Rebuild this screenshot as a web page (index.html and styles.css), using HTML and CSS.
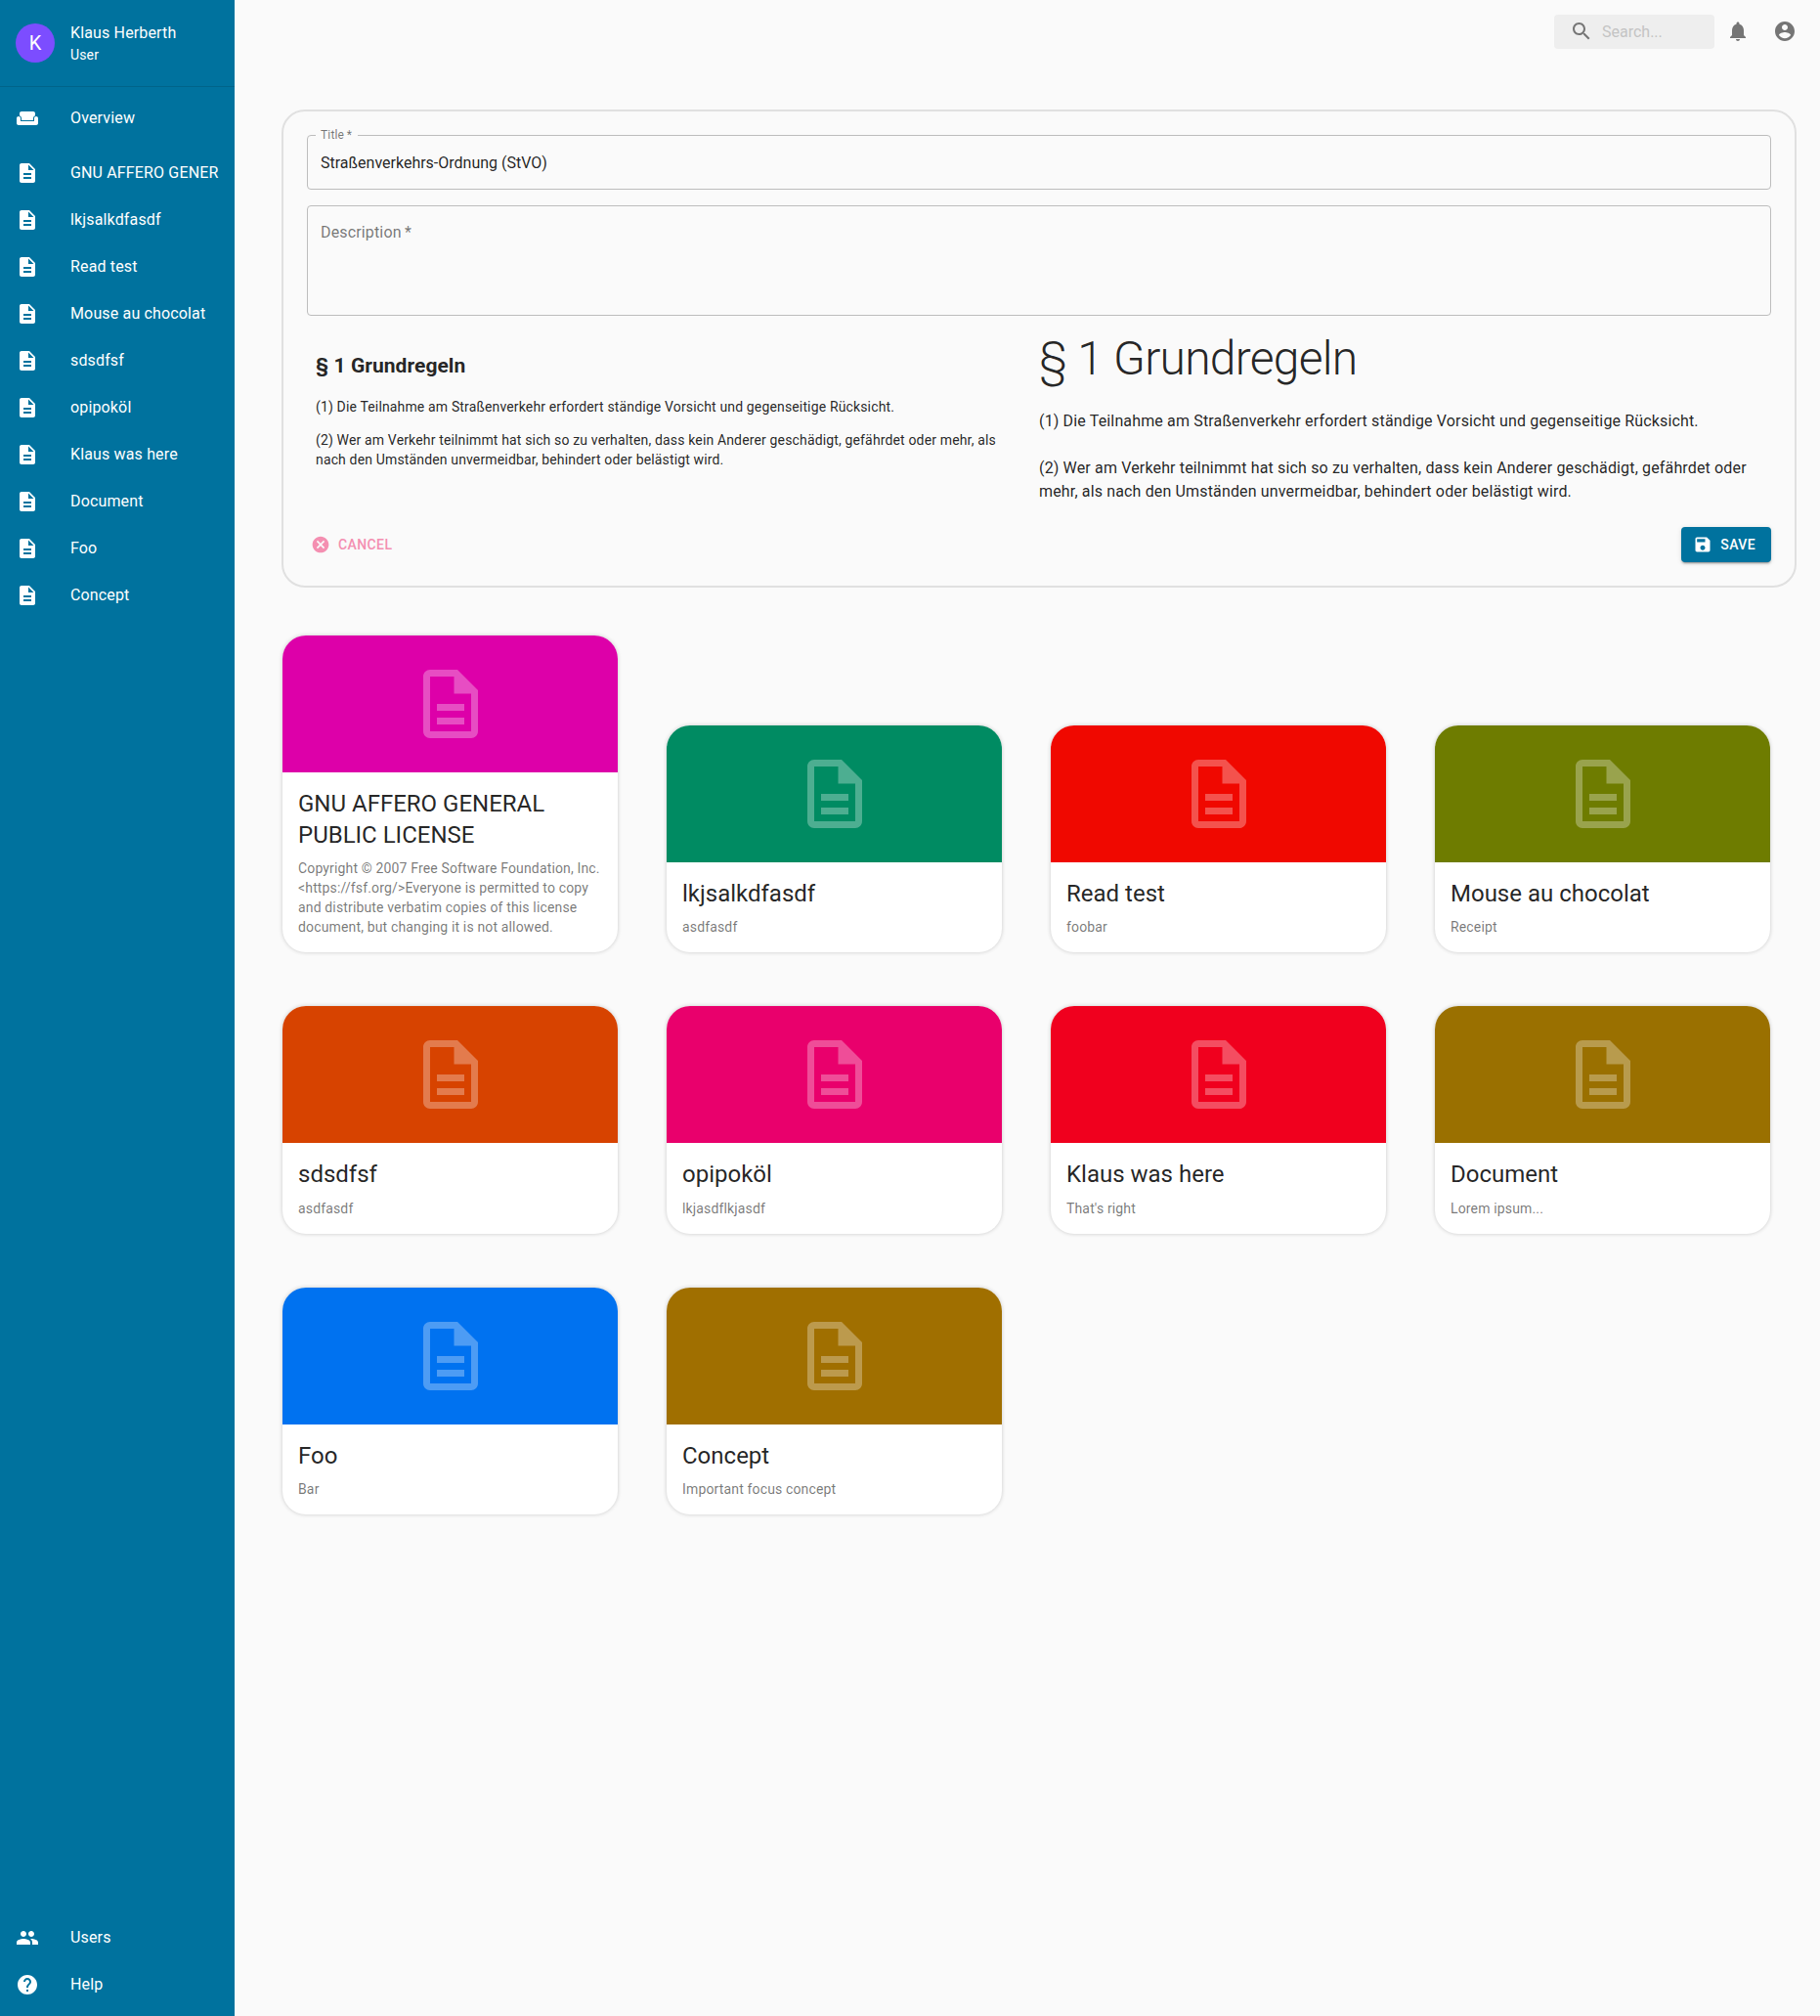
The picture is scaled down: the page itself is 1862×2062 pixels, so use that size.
FILE: index.html
```html
<!DOCTYPE html>
<html lang="de">
<head>
<meta charset="utf-8">
<title>Documents</title>
<link rel="stylesheet" href="styles.css">
</head>
<body>
<svg class="defs" width="0" height="0" aria-hidden="true">
  <symbol id="i-doc" viewBox="0 0 24 24"><path d="M14 2H6c-1.1 0-1.99.9-1.99 2L4 20c0 1.1.89 2 1.99 2H18c1.1 0 2-.9 2-2V8l-6-6zm2 16H8v-2h8v2zm0-4H8v-2h8v2zm-3-5V3.5L18.5 9H13z"/></symbol>
  <symbol id="i-doc-o" viewBox="0 0 24 24"><path d="M8 16h8v2H8zm0-4h8v2H8zm6-10H6c-1.1 0-2 .9-2 2v16c0 1.1.89 2 1.99 2H18c1.1 0 2-.9 2-2V8l-6-6zm4 18H6V4h7v5h5v11z"/></symbol>
  <symbol id="i-sofa" viewBox="0 0 24 24"><path d="M21 10c-1.1 0-2 .9-2 2v3H5v-3c0-1.1-.9-2-2-2s-2 .9-2 2v5c0 1.1.9 2 2 2h18c1.1 0 2-.9 2-2v-5c0-1.1-.9-2-2-2zm-3-5H6c-1.1 0-2 .9-2 2v2.15c1.16.41 2 1.52 2 2.81V14h12v-2.03c0-1.3.84-2.4 2-2.81V7c0-1.1-.9-2-2-2z"/></symbol>
  <symbol id="i-people" viewBox="0 0 24 24"><path d="M16 11c1.66 0 2.99-1.34 2.99-3S17.66 5 16 5c-1.66 0-3 1.34-3 3s1.34 3 3 3zm-8 0c1.66 0 2.99-1.34 2.99-3S9.66 5 8 5C6.34 5 5 6.34 5 8s1.34 3 3 3zm0 2c-2.33 0-7 1.17-7 3.5V19h14v-2.5c0-2.33-4.67-3.5-7-3.5zm8 0c-.29 0-.62.02-.97.05 1.16.84 1.97 1.97 1.97 3.45V19h6v-2.5c0-2.33-4.67-3.5-7-3.5z"/></symbol>
  <symbol id="i-help" viewBox="0 0 24 24"><path d="M12 2C6.48 2 2 6.48 2 12s4.48 10 10 10 10-4.48 10-10S17.52 2 12 2zm1 17h-2v-2h2v2zm2.07-7.75l-.9.92C13.45 12.9 13 13.5 13 15h-2v-.5c0-1.1.45-2.1 1.17-2.83l1.24-1.26c.37-.36.59-.86.59-1.41 0-1.1-.9-2-2-2s-2 .9-2 2H8c0-2.21 1.79-4 4-4s4 1.79 4 4c0 .88-.36 1.68-.93 2.25z"/></symbol>
</svg>

<div class="app">
  <aside class="sidebar">
    <div class="user">
      <div class="avatar">K</div>
      <div class="user-text">
        <div class="user-name">Klaus Herberth</div>
        <div class="user-role">User</div>
      </div>
    </div>
    <nav class="nav nav-top">
      <a class="nav-item"><svg class="nav-icon"><use href="#i-sofa"/></svg><span class="nav-label">Overview</span></a>
    </nav>
    <nav class="nav nav-docs">
      <a class="nav-item"><svg class="nav-icon"><use href="#i-doc"/></svg><span class="nav-label">GNU AFFERO GENER</span></a>
      <a class="nav-item"><svg class="nav-icon"><use href="#i-doc"/></svg><span class="nav-label">lkjsalkdfasdf</span></a>
      <a class="nav-item"><svg class="nav-icon"><use href="#i-doc"/></svg><span class="nav-label">Read test</span></a>
      <a class="nav-item"><svg class="nav-icon"><use href="#i-doc"/></svg><span class="nav-label">Mouse au chocolat</span></a>
      <a class="nav-item"><svg class="nav-icon"><use href="#i-doc"/></svg><span class="nav-label">sdsdfsf</span></a>
      <a class="nav-item"><svg class="nav-icon"><use href="#i-doc"/></svg><span class="nav-label">opipoköl</span></a>
      <a class="nav-item"><svg class="nav-icon"><use href="#i-doc"/></svg><span class="nav-label">Klaus was here</span></a>
      <a class="nav-item"><svg class="nav-icon"><use href="#i-doc"/></svg><span class="nav-label">Document</span></a>
      <a class="nav-item"><svg class="nav-icon"><use href="#i-doc"/></svg><span class="nav-label">Foo</span></a>
      <a class="nav-item"><svg class="nav-icon"><use href="#i-doc"/></svg><span class="nav-label">Concept</span></a>
    </nav>
    <nav class="nav nav-bottom">
      <a class="nav-item"><svg class="nav-icon"><use href="#i-people"/></svg><span class="nav-label">Users</span></a>
      <a class="nav-item"><svg class="nav-icon"><use href="#i-help"/></svg><span class="nav-label">Help</span></a>
    </nav>
  </aside>

  <main class="main">
    <header class="topbar">
      <div class="search">
        <svg class="search-icon" viewBox="0 0 24 24"><path d="M15.5 14h-.79l-.28-.27C15.41 12.59 16 11.11 16 9.5 16 5.91 13.09 3 9.5 3S3 5.91 3 9.5 5.91 16 9.5 16c1.61 0 3.09-.59 4.23-1.57l.27.28v.79l5 4.99L20.49 19l-4.99-5zm-6 0C7.01 14 5 11.99 5 9.5S7.01 5 9.5 5 14 7.01 14 9.5 11.99 14 9.5 14z"/></svg>
        <span class="search-text">Search...</span>
      </div>
      <svg class="top-icon top-bell" viewBox="0 0 24 24"><path d="M12 22c1.1 0 2-.9 2-2h-4c0 1.1.89 2 2 2zm6-6v-5c0-3.07-1.64-5.64-4.5-6.32V4c0-.83-.67-1.5-1.5-1.5s-1.5.67-1.5 1.5v.68C7.63 5.36 6 7.92 6 11v5l-2 2v1h16v-1l-2-2z"/></svg>
      <svg class="top-icon" viewBox="0 0 24 24"><path d="M12 2C6.48 2 2 6.48 2 12s4.48 10 10 10 10-4.48 10-10S17.52 2 12 2zm0 3c1.66 0 3 1.34 3 3s-1.34 3-3 3-3-1.34-3-3 1.34-3 3-3zm0 14.2c-2.5 0-4.71-1.28-6-3.22.03-1.99 4-3.08 6-3.08 1.99 0 5.97 1.09 6 3.08-1.29 1.94-3.5 3.22-6 3.22z"/></svg>
    </header>

    <section class="panel">
      <div class="field field-title">
        <span class="field-legend">Title&thinsp;*</span>
        <span class="field-value">Straßenverkehrs-Ordnung (StVO)</span>
      </div>
      <div class="field field-desc">
        <span class="field-placeholder">Description&thinsp;*</span>
      </div>
      <div class="preview">
        <div class="source">
          <h2 class="source-h">§ 1 Grundregeln</h2>
          <p class="source-p">(1) Die Teilnahme am Straßenverkehr erfordert ständige Vorsicht und gegenseitige Rücksicht.</p>
          <p class="source-p">(2) Wer am Verkehr teilnimmt hat sich so zu verhalten, dass kein Anderer geschädigt, gefährdet oder mehr, als nach den Umständen unvermeidbar, behindert oder belästigt wird.</p>
        </div>
        <div class="rendered">
          <h1 class="rendered-h">§ 1 Grundregeln</h1>
          <p class="rendered-p">(1) Die Teilnahme am Straßenverkehr erfordert ständige Vorsicht und gegenseitige Rücksicht.</p>
          <p class="rendered-p">(2) Wer am Verkehr teilnimmt hat sich so zu verhalten, dass kein Anderer geschädigt, gefährdet oder mehr, als nach den Umständen unvermeidbar, behindert oder belästigt wird.</p>
        </div>
      </div>
      <div class="actions">
        <button class="btn btn-cancel">
          <svg class="btn-icon" viewBox="0 0 24 24"><path d="M12 2C6.47 2 2 6.47 2 12s4.47 10 10 10 10-4.47 10-10S17.53 2 12 2zm5 13.59L15.59 17 12 13.41 8.41 17 7 15.59 10.59 12 7 8.41 8.41 7 12 10.59 15.59 7 17 8.41 13.41 12 17 15.59z"/></svg>
          Cancel
        </button>
        <button class="btn btn-save">
          <svg class="btn-icon" viewBox="0 0 24 24"><path d="M17 3H5c-1.11 0-2 .9-2 2v14c0 1.1.89 2 2 2h14c1.1 0 2-.9 2-2V7l-4-4zm-5 16c-1.66 0-3-1.34-3-3s1.34-3 3-3 3 1.34 3 3-1.34 3-3 3zm3-10H5V5h10v4z"/></svg>
          Save
        </button>
      </div>
    </section>

    <section class="cards">
      <article class="card">
        <div class="card-media c-magenta"><svg class="card-icon"><use href="#i-doc-o"/></svg></div>
        <div class="card-body"><h3 class="card-title">GNU AFFERO GENERAL PUBLIC LICENSE</h3><p class="card-text">Copyright © 2007 Free Software Foundation, Inc. &lt;https://fsf.org/&gt;Everyone is permitted to copy and distribute verbatim copies of this license document, but changing it is not allowed.</p></div>
      </article>
      <article class="card">
        <div class="card-media c-green"><svg class="card-icon"><use href="#i-doc-o"/></svg></div>
        <div class="card-body"><h3 class="card-title">lkjsalkdfasdf</h3><p class="card-text">asdfasdf</p></div>
      </article>
      <article class="card">
        <div class="card-media c-red"><svg class="card-icon"><use href="#i-doc-o"/></svg></div>
        <div class="card-body"><h3 class="card-title">Read test</h3><p class="card-text">foobar</p></div>
      </article>
      <article class="card">
        <div class="card-media c-olive"><svg class="card-icon"><use href="#i-doc-o"/></svg></div>
        <div class="card-body"><h3 class="card-title">Mouse au chocolat</h3><p class="card-text">Receipt</p></div>
      </article>
      <article class="card">
        <div class="card-media c-orange"><svg class="card-icon"><use href="#i-doc-o"/></svg></div>
        <div class="card-body"><h3 class="card-title">sdsdfsf</h3><p class="card-text">asdfasdf</p></div>
      </article>
      <article class="card">
        <div class="card-media c-pink"><svg class="card-icon"><use href="#i-doc-o"/></svg></div>
        <div class="card-body"><h3 class="card-title">opipoköl</h3><p class="card-text">lkjasdflkjasdf</p></div>
      </article>
      <article class="card">
        <div class="card-media c-crimson"><svg class="card-icon"><use href="#i-doc-o"/></svg></div>
        <div class="card-body"><h3 class="card-title">Klaus was here</h3><p class="card-text">That's right</p></div>
      </article>
      <article class="card">
        <div class="card-media c-brown"><svg class="card-icon"><use href="#i-doc-o"/></svg></div>
        <div class="card-body"><h3 class="card-title">Document</h3><p class="card-text">Lorem ipsum...</p></div>
      </article>
      <article class="card">
        <div class="card-media c-blue"><svg class="card-icon"><use href="#i-doc-o"/></svg></div>
        <div class="card-body"><h3 class="card-title">Foo</h3><p class="card-text">Bar</p></div>
      </article>
      <article class="card">
        <div class="card-media c-ochre"><svg class="card-icon"><use href="#i-doc-o"/></svg></div>
        <div class="card-body"><h3 class="card-title">Concept</h3><p class="card-text">Important focus concept</p></div>
      </article>
    </section>
  </main>
</div>
</body>
</html>
```

FILE: styles.css
```css
* { box-sizing: border-box; }
html, body { margin: 0; padding: 0; height: 100%; }
body {
  background: #fafafa;
  color: rgba(0, 0, 0, 0.87);
  font-family: Roboto, "Noto Sans", sans-serif;
  font-size: 16px;
}
.defs { position: absolute; }

.app { display: flex; min-height: 2062px; }

/* Sidebar */
.sidebar {
  flex: 0 0 240px;
  width: 240px;
  background: #00729e;
  color: #fff;
  display: flex;
  flex-direction: column;
}
.user {
  display: flex;
  align-items: center;
  height: 89px;
  padding: 0 16px 1px;
  border-bottom: 1px solid rgba(0, 0, 0, 0.12);
}
.avatar {
  width: 40px;
  height: 40px;
  flex: none;
  margin-right: 16px;
  border-radius: 50%;
  background: #7c4dff;
  display: flex;
  align-items: center;
  justify-content: center;
  font-size: 20px;
}
.user-name { font-size: 16px; line-height: 24px; letter-spacing: 0.15px; }
.user-role { font-size: 14px; line-height: 20px; letter-spacing: 0.15px; }
.nav { display: flex; flex-direction: column; }
.nav-top { padding: 8px 0; }
.nav-bottom { margin-top: auto; padding-bottom: 8px; }
.nav-item {
  display: flex;
  align-items: center;
  height: 48px;
  padding: 0 16px;
}
.nav-icon { width: 24px; height: 24px; flex: none; margin-right: 32px; fill: #fff; }
.nav-label {
  font-size: 16px;
  line-height: 24px;
  letter-spacing: 0.15px;
  white-space: nowrap;
}

/* Main */
.main { flex: 1; min-width: 0; padding: 0 24px 0 48px; }
.topbar {
  height: 64px;
  margin-bottom: 48px;
  display: flex;
  align-items: center;
  justify-content: flex-end;
  gap: 24px;
}
.search {
  width: 164px;
  height: 35px;
  margin-right: -12px;
  padding-left: 16px;
  background: #eeeeee;
  border-radius: 4px;
  display: flex;
  align-items: center;
}
.search-icon { width: 24px; height: 24px; fill: #757575; flex: none; margin-right: 9px; }
.search-text { font-size: 16px; color: #c4c4c4; }
.top-icon { width: 24px; height: 24px; fill: #757575; flex: none; }

/* Edit panel */
.panel {
  border: 2px solid #e0e0e0;
  border-radius: 24px;
  padding: 24px;
  margin-bottom: 49px;
}
.field {
  position: relative;
  border: 1px solid #bdbdbd;
  border-radius: 4px;
  padding: 0 13px;
}
.field-title { height: 56px; padding-top: 2px; display: flex; align-items: center; }
.field-desc { height: 113px; margin-top: 16px; padding-top: 15px; }
.field-legend {
  position: absolute;
  left: 8px;
  top: -9px;
  padding: 0 6px 0 5px;
  background: #fafafa;
  color: rgba(0, 0, 0, 0.54);
  font-size: 12px;
  line-height: 16px;
  letter-spacing: 0.15px;
}
.field-value { font-size: 16px; line-height: 24px; }
.field-placeholder { font-size: 16px; line-height: 24px; letter-spacing: 0.15px; color: rgba(0, 0, 0, 0.54); }

.preview { display: grid; grid-template-columns: 1fr 1fr; }
.source { padding: 39px 26px 0 9px; font-size: 14px; line-height: 20px; letter-spacing: 0.15px; }
.source-h { margin: 0 0 20px; font-size: 21px; line-height: 24px; font-weight: 700; letter-spacing: 0.05px; }
.source-p { margin: 0 0 14px; }
.rendered { padding-top: 15px; }
.rendered-h { margin: 0 0 23px; font-size: 48px; line-height: 58px; font-weight: 300; letter-spacing: -0.75px; }
.rendered-p { margin: 0 0 24px; font-size: 16px; line-height: 24px; letter-spacing: 0.15px; }

.actions { display: flex; justify-content: space-between; }
.btn {
  height: 36px;
  border: 0;
  border-radius: 4px;
  display: inline-flex;
  align-items: center;
  font-family: inherit;
  font-size: 14px;
  font-weight: 500;
  letter-spacing: 0.4px;
  text-transform: uppercase;
}
.btn-icon { width: 20px; height: 20px; fill: currentColor; margin-right: 8px; flex: none; }
.btn-cancel { background: none; color: #f48fb1; padding: 0 6px 0 4px; }
.btn-save {
  background: #00729e;
  color: #fff;
  padding: 0 16px 0 12px;
  box-shadow: 0 3px 1px -2px rgba(0,0,0,.2), 0 2px 2px 0 rgba(0,0,0,.14), 0 1px 5px 0 rgba(0,0,0,.12);
}

/* Cards */
.cards {
  display: grid;
  grid-template-columns: repeat(4, 343px);
  column-gap: 50px;
  row-gap: 55px;
  align-items: end;
  padding-left: 1px;
}
.card {
  background: #fff;
  border-radius: 24px;
  overflow: hidden;
  box-shadow: 0 0 4px rgba(0, 0, 0, 0.2);
}
.card-media {
  height: 140px;
  display: flex;
  align-items: center;
  justify-content: center;
}
.card-icon { width: 84px; height: 84px; fill: rgba(255, 255, 255, 0.3); }
.card-body { padding: 16px; }
.card-title { margin: 0 0 8.4px; font-size: 24px; line-height: 32px; font-weight: 400; }
.card-text { margin: 0; font-size: 14px; line-height: 20px; letter-spacing: 0.15px; color: rgba(0, 0, 0, 0.54); }

.c-magenta { background: #dd00a9; }
.c-green { background: #008b62; }
.c-red { background: #f00800; }
.c-olive { background: #6e7c00; }
.c-orange { background: #d74300; }
.c-pink { background: #e9006c; }
.c-crimson { background: #f0001e; }
.c-brown { background: #9a7000; }
.c-blue { background: #0072f0; }
.c-ochre { background: #a06f00; }
```
